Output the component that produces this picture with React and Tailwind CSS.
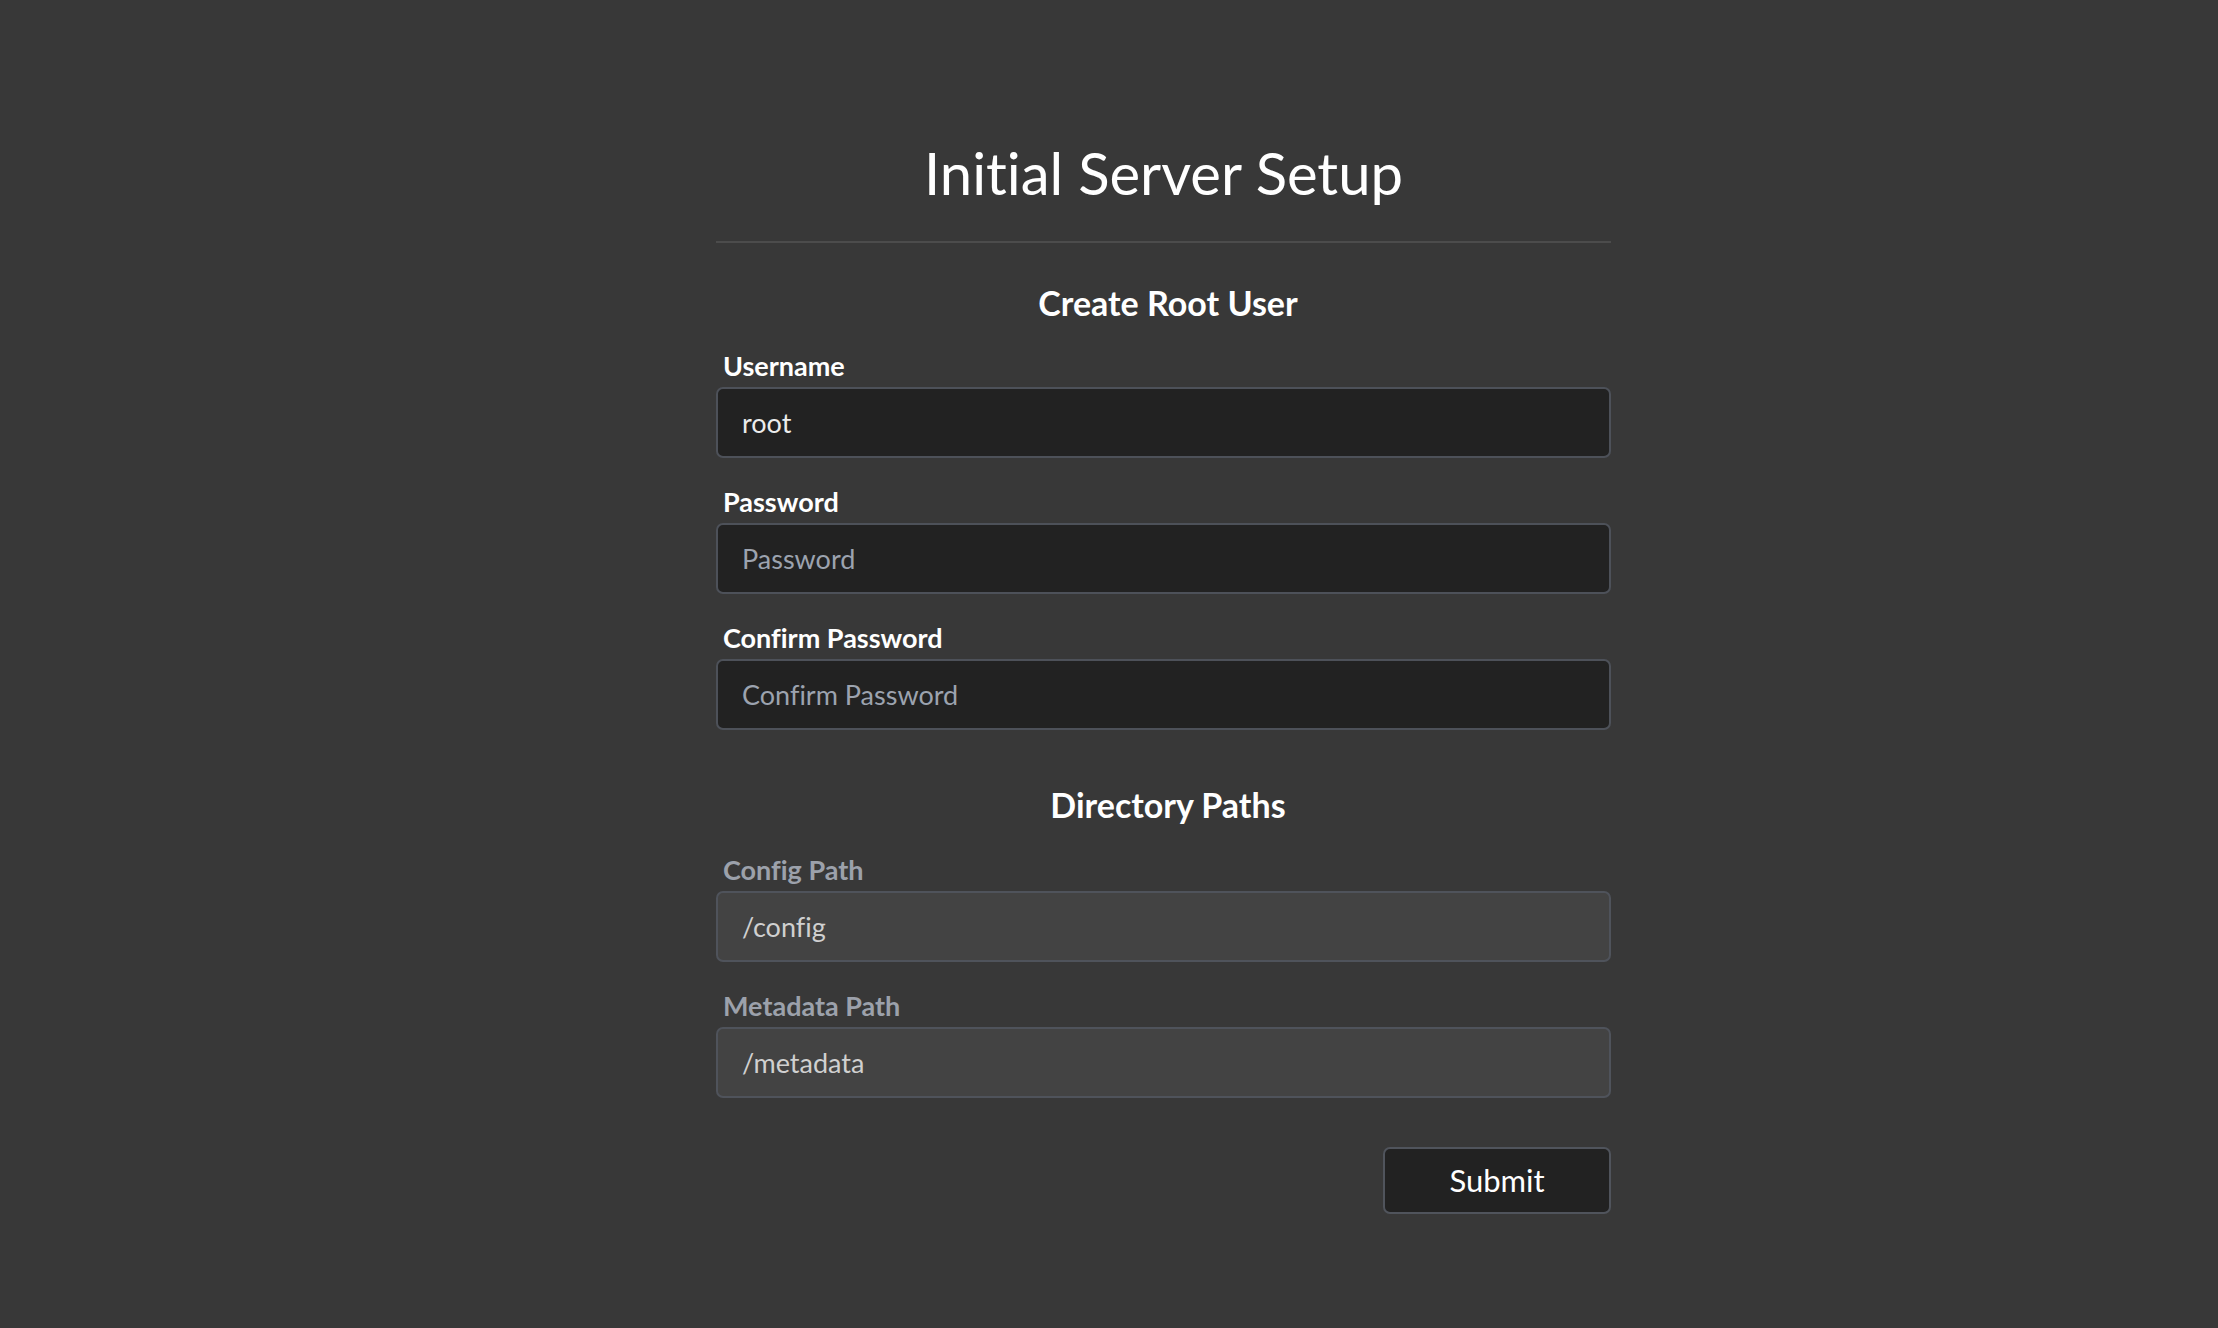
import React from "react";

function Field({ label, value, placeholder, disabled, type = "text" }) {
  return (
    <div className="flex flex-col">
      <label
        className={
          "h-[30px] leading-[30px] pl-[7px] mb-[6px] text-[27px] font-bold " +
          (disabled ? "text-[#9ca1ab]" : "text-white")
        }
      >
        {label}
      </label>
      <input
        type={type}
        defaultValue={value}
        placeholder={placeholder}
        disabled={disabled}
        className={
          "h-[71px] w-full rounded-[7px] border-2 px-[24px] text-[27px] outline-none placeholder:text-[#9ca3af] " +
          (disabled
            ? "bg-[#434343] border-[#4f535b] text-[#d0d0d0]"
            : "bg-[#222222] border-[#4d5159] text-[#ececec]")
        }
      />
    </div>
  );
}

export default function App() {
  return (
    <div
      className="min-h-screen w-full bg-[#383838] flex justify-center pl-[109px] [font-variant-ligatures:none]"
      style={{ fontFamily: "Lato, 'Open Sans', sans-serif" }}
    >
      <div className="w-[895px] pt-[137px] pb-[100px] flex flex-col">
        <h1 className="h-[72px] leading-[72px] text-center text-[58px] font-normal text-white">
          Initial Server Setup
        </h1>
        <div className="mt-[32px] h-[2px] bg-[#4c4c4c]" />
        <h2 className="mt-[40px] h-[40px] leading-[40px] pl-[9px] text-center text-[34px] font-bold text-white">
          Create Root User
        </h2>
        <div className="mt-[28px] flex flex-col gap-[29px]">
          <Field label="Username" value="root" />
          <Field label="Password" placeholder="Password" type="password" />
          <Field label="Confirm Password" placeholder="Confirm Password" type="password" />
        </div>
        <h2 className="mt-[55px] h-[40px] leading-[40px] pl-[9px] text-center text-[34px] font-bold text-white">
          Directory Paths
        </h2>
        <div className="mt-[30px] flex flex-col gap-[29px]">
          <Field label="Config Path" value="/config" disabled />
          <Field label="Metadata Path" value="/metadata" disabled />
        </div>
        <div className="mt-[49px] flex justify-end">
          <button className="h-[67px] w-[228px] rounded-[7px] border-2 border-[#50545c] bg-[#222222] text-[31px] text-white">
            Submit
          </button>
        </div>
      </div>
    </div>
  );
}
